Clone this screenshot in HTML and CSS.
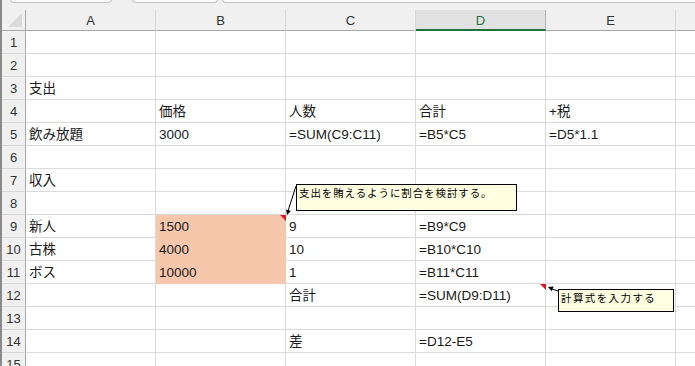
FILE: index.html
```html
<!DOCTYPE html>
<html lang="ja">
<head>
    <meta charset="UTF-8">
    <meta name="viewport" content="width=device-width, initial-scale=1.0">
    <title>Sheet1</title>
    <link rel="stylesheet" href="styles.css">
</head>
<body>
    <div class="window">
        <div class="tabs">
            <div class="tab tab-1"></div>
            <div class="tab tab-2"></div>
            <div class="tab tab-3"></div>
        </div>

        <div class="sheet">
            <!-- column headers -->
            <div class="ch corner"></div>
            <div class="ch">A</div>
            <div class="ch">B</div>
            <div class="ch">C</div>
            <div class="ch active">D</div>
            <div class="ch">E</div>
            <div class="ch"></div>

            <div class="rh">1</div><div class="c"></div><div class="c"></div><div class="c"></div><div class="c"></div><div class="c"></div><div class="c"></div>
            <div class="rh">2</div><div class="c"></div><div class="c"></div><div class="c"></div><div class="c"></div><div class="c"></div><div class="c"></div>
            <div class="rh">3</div><div class="c">支出</div><div class="c"></div><div class="c"></div><div class="c"></div><div class="c"></div><div class="c"></div>
            <div class="rh">4</div><div class="c"></div><div class="c">価格</div><div class="c">人数</div><div class="c">合計</div><div class="c">+税</div><div class="c"></div>
            <div class="rh">5</div><div class="c">飲み放題</div><div class="c">3000</div><div class="c">=SUM(C9:C11)</div><div class="c">=B5*C5</div><div class="c">=D5*1.1</div><div class="c"></div>
            <div class="rh">6</div><div class="c"></div><div class="c"></div><div class="c"></div><div class="c"></div><div class="c"></div><div class="c"></div>
            <div class="rh">7</div><div class="c">収入</div><div class="c"></div><div class="c"></div><div class="c"></div><div class="c"></div><div class="c"></div>
            <div class="rh">8</div><div class="c"></div><div class="c"></div><div class="c"></div><div class="c"></div><div class="c"></div><div class="c"></div>
            <div class="rh">9</div><div class="c">新人</div><div class="c fill note">1500</div><div class="c">9</div><div class="c">=B9*C9</div><div class="c"></div><div class="c"></div>
            <div class="rh">10</div><div class="c">古株</div><div class="c fill">4000</div><div class="c">10</div><div class="c">=B10*C10</div><div class="c"></div><div class="c"></div>
            <div class="rh">11</div><div class="c">ボス</div><div class="c fill">10000</div><div class="c">1</div><div class="c">=B11*C11</div><div class="c"></div><div class="c"></div>
            <div class="rh">12</div><div class="c"></div><div class="c"></div><div class="c">合計</div><div class="c note">=SUM(D9:D11)</div><div class="c"></div><div class="c"></div>
            <div class="rh">13</div><div class="c"></div><div class="c"></div><div class="c"></div><div class="c"></div><div class="c"></div><div class="c"></div>
            <div class="rh">14</div><div class="c"></div><div class="c"></div><div class="c">差</div><div class="c">=D12-E5</div><div class="c"></div><div class="c"></div>
            <div class="rh">15</div><div class="c"></div><div class="c"></div><div class="c"></div><div class="c"></div><div class="c"></div><div class="c"></div>
        </div>

        <!-- comments -->
        <div class="comment comment-1">支出を賄えるように割合を検討する。</div>
        <div class="comment comment-2">計算式を入力する</div>

        <svg class="arrows" width="695" height="366" viewBox="0 0 695 366">
            <line x1="296" y1="186" x2="288" y2="211" stroke="#000" stroke-width="1"/>
            <polygon points="287,215 290.9,211 286.1,209.5" fill="#000"/>
            <line x1="558" y1="291" x2="552" y2="289" stroke="#000" stroke-width="1"/>
            <polygon points="548,287 553.6,286.5 551.7,291.2" fill="#000"/>
        </svg>
    </div>
</body>
</html>
```

FILE: styles.css
```css
body {
    margin: 0;
    padding: 0;
    background-color: #ffffff;
    font-family: "Liberation Sans", "Noto Sans CJK JP", sans-serif;
    overflow: hidden;
}
.window {
    position: relative;
    width: 695px;
    height: 366px;
    overflow: hidden;
    border-left: 2px solid #8a8a8a;
    box-sizing: border-box;
}
.tabs {
    height: 10px;
    background-color: #f0f0f0;
    position: relative;
}
.tab {
    position: absolute;
    top: -2px;
    height: 4px;
    background-color: #fafafa;
    border: 1px solid #c4c4c4;
    border-top: none;
    border-radius: 0 0 4px 4px;
}
.tab-1 {
    left: 8px;
    width: 100px;
}
.tab-2 {
    left: 130px;
    width: 84px;
}
.tab-3 {
    left: 220px;
    width: 500px;
}
.sheet {
    display: grid;
    grid-template-columns: 24px repeat(5, 130px) 130px;
    grid-template-rows: 21px;
    grid-auto-rows: 23px;
}
.ch {
    box-sizing: border-box;
    background-color: #f0f0f0;
    border-bottom: 1px solid #a9a9a9;
    border-right: 1px solid #d8d8d8;
    color: #333;
    font-size: 13px;
    display: flex;
    align-items: center;
    justify-content: center;
    padding-top: 1px;
}
.ch.corner {
    position: relative;
    border-right: 1px solid #a9a9a9;
}
.ch.corner::after {
    content: "";
    position: absolute;
    right: 3px;
    bottom: 3px;
    width: 14px;
    height: 14px;
    background-color: #dadada;
    clip-path: polygon(100% 0, 100% 100%, 0 100%);
}
.ch.active {
    background-color: #e1e1e1;
    color: #217346;
    border-bottom: 2px solid #217346;
    border-right: 1px solid #b5b5b5;
}
.rh {
    box-sizing: border-box;
    background-color: #f0f0f0;
    border-right: 1px solid #a9a9a9;
    border-bottom: 1px solid #d8d8d8;
    color: #333;
    font-size: 13px;
    display: flex;
    align-items: center;
    justify-content: center;
    padding-top: 1px;
}
.c {
    box-sizing: border-box;
    border-right: 1px solid #dadada;
    border-bottom: 1px solid #dadada;
    color: #1a1a1a;
    font-size: 13.5px;
    line-height: 16px;
    padding: 0 3px 2px 3px;
    display: flex;
    align-items: flex-end;
    white-space: nowrap;
    position: relative;
}
.c.fill {
    background-color: #f7c7ac;
    border-right-color: #f7c7ac;
    border-bottom-color: #f7c7ac;
}
.c.note::after {
    content: "";
    position: absolute;
    top: 0;
    right: -1px;
    width: 6px;
    height: 6px;
    background-color: #e81123;
    clip-path: polygon(0 0, 100% 0, 100% 100%);
}
.comment {
    position: absolute;
    box-sizing: border-box;
    background-color: #ffffe1;
    border: 1px solid #000;
    color: #000;
    font-family: "Noto Sans CJK JP", sans-serif;
    font-size: 10.5px;
    line-height: 12px;
    letter-spacing: 0.9px;
    padding: 2px 2px;
    white-space: nowrap;
}
.comment-1 {
    left: 294px;
    top: 184px;
    width: 221px;
    height: 27px;
}
.comment-2 {
    left: 556px;
    top: 289px;
    width: 116px;
    height: 23px;
    letter-spacing: 1.4px;
}
.arrows {
    position: absolute;
    left: -2px;
    top: 0;
    pointer-events: none;
}
```
